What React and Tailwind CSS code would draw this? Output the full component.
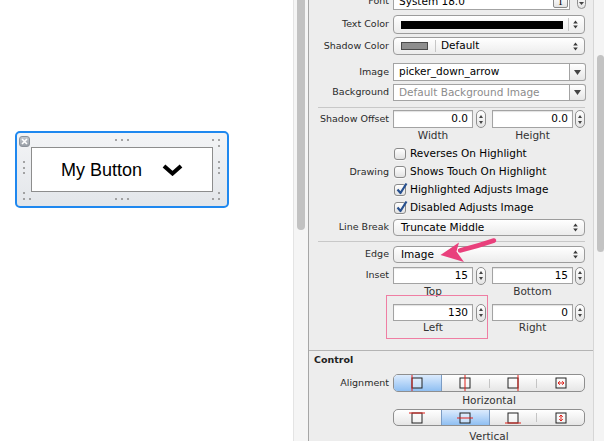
import React from 'react';

const LABEL = 'w-[80px] shrink-0 text-right text-[9.5px] text-[#2a2a2a] whitespace-nowrap';
const SUB = 'text-center text-[10.5px] text-[#333]';

function Arrows() {
  return (
    <svg width="5" height="9" viewBox="0 0 5 9">
      <path d="M2.5 0.5 L4.8 3.4 H0.2Z M2.5 8.5 L4.8 5.6 H0.2Z" fill="#3a3a3a" />
    </svg>
  );
}

function Popup({ children }) {
  return (
    <div className="ml-[4px] w-[192px] h-full flex items-center rounded-[4px] border border-[#9c9c9c] bg-linear-to-b from-white to-[#ececec] pl-[7px] pr-[6px] text-[10.5px] text-black">
      {children}
      <div className="ml-auto flex items-center">
        <Arrows />
      </div>
    </div>
  );
}

function Stepper() {
  return (
    <div className="w-[10px] h-[18px] shrink-0 rounded-full border border-[#8f8f8f] bg-linear-to-b from-white to-[#e4e4e4] flex flex-col items-center justify-center gap-[3px]">
      <svg width="4" height="3" viewBox="0 0 4 3"><path d="M2 0L4 3H0Z" fill="#444" /></svg>
      <svg width="4" height="3" viewBox="0 0 4 3"><path d="M0 0H4L2 3Z" fill="#444" /></svg>
    </div>
  );
}

function NumField({ value, wide }) {
  return (
    <div
      className={`${wide ? 'w-[81px]' : 'w-[80px]'} h-full shrink-0 border border-[#a3a3a3] bg-white flex items-center justify-end pr-[4px] text-[10.5px] text-black shadow-[inset_0_1px_1px_rgba(0,0,0,0.12)]`}
    >
      {value}
    </div>
  );
}

function PairRow({ label, a, b, className }) {
  return (
    <div className={`flex items-center ${className}`}>
      <div className={LABEL}>{label}</div>
      <div className="ml-[4px] flex items-center h-full">
        <NumField value={a} />
        <div className="ml-[3px]"><Stepper /></div>
        <div className="ml-[6px] h-full"><NumField value={b} wide /></div>
        <div className="ml-[2px]"><Stepper /></div>
      </div>
    </div>
  );
}

function SubLabels({ a, b, className = '' }) {
  return (
    <div className={`flex items-center h-[14px] ${className}`}>
      <div className="w-[84px] shrink-0" />
      <div className={`w-[80px] ${SUB}`}>{a}</div>
      <div className="w-[19px] shrink-0" />
      <div className={`w-[81px] ${SUB}`}>{b}</div>
    </div>
  );
}

function Checkbox({ checked }) {
  return (
    <div className="relative w-[12px] h-[12px] shrink-0 rounded-[3px] border border-[#8a8a8a] bg-linear-to-b from-white to-[#e2e2e2] shadow-[0_1px_0_rgba(255,255,255,0.6)]">
      {checked && (
        <svg className="absolute left-[1px] top-[-3px]" width="12" height="13" viewBox="0 0 12 13">
          <path d="M1.5 7.5 L4.5 11 L10.5 1.5" fill="none" stroke="#27508f" strokeWidth="2.2" strokeLinejoin="round" />
        </svg>
      )}
    </div>
  );
}

function CheckRow({ label, text, checked }) {
  return (
    <div className="flex items-center h-[18px]">
      <div className={LABEL}>{label}</div>
      <div className="ml-[5px]"><Checkbox checked={checked} /></div>
      <div className="ml-[4px] text-[10.5px] text-black whitespace-nowrap">{text}</div>
    </div>
  );
}

function AlignIcon({ kind }) {
  const red = '#e0201a';
  return (
    <svg width="16" height="16" viewBox="0 0 16 16">
      <rect x="3" y="3" width="10" height="10" fill="#fff" fillOpacity="0.4" stroke="#222" />
      {kind === 'hl' && <line x1="3" y1="0" x2="3" y2="16" stroke={red} />}
      {kind === 'hc' && <line x1="8" y1="0" x2="8" y2="16" stroke={red} />}
      {kind === 'hr' && <line x1="13" y1="0" x2="13" y2="16" stroke={red} />}
      {kind === 'hf' && (
        <path d="M5 8H11 M5 8L6.8 6.2 M5 8L6.8 9.8 M11 8L9.2 6.2 M11 8L9.2 9.8" stroke={red} fill="none" />
      )}
      {kind === 'vt' && <line x1="0" y1="3" x2="16" y2="3" stroke={red} />}
      {kind === 'vc' && <line x1="0" y1="8" x2="16" y2="8" stroke={red} />}
      {kind === 'vb' && <line x1="0" y1="13" x2="16" y2="13" stroke={red} />}
      {kind === 'vf' && (
        <path d="M8 5V11 M8 5L6.2 6.8 M8 5L9.8 6.8 M8 11L6.2 9.2 M8 11L9.8 9.2" stroke={red} fill="none" />
      )}
    </svg>
  );
}

function Segmented({ icons, selected, h }) {
  return (
    <div className={`ml-[4px] w-[192px] ${h} flex rounded-[5px] border border-[#8e8e8e] overflow-hidden bg-linear-to-b from-white to-[#e6e6e6]`}>
      {icons.map((k, i) => {
        const sel = i === selected;
        const nextSel = i + 1 === selected;
        return (
          <React.Fragment key={k}>
            <div
              className={`flex-1 flex items-center justify-center ${
                sel ? 'bg-linear-to-b from-[#dcebfd] to-[#8fbff2]' : ''
              }`}
            >
              <AlignIcon kind={k} />
            </div>
            {i < icons.length - 1 &&
              (sel || nextSel ? (
                <div className="w-px self-stretch bg-[#7b9cc4]" />
              ) : (
                <div className="w-px h-[9px] self-center bg-[#c4c4c4]" />
              ))}
          </React.Fragment>
        );
      })}
    </div>
  );
}

function Dot({ className }) {
  return <div className={`absolute w-[2px] h-[2px] rounded-full bg-[#8a8a8a] ${className}`} />;
}

function CanvasButton() {
  return (
    <div className="relative w-[214px] h-[77px] border-2 border-[#1f88ef] rounded-[5px] bg-linear-to-b from-[#f3f4f6] to-[#e3e6ea] p-[14px]">
      <div className="absolute left-[2px] top-[3px] w-[11px] h-[11px] rounded-[3px] border border-[#8d939b] bg-linear-to-b from-[#c3c7cd] to-[#9aa0a8] flex items-center justify-center">
        <svg width="7" height="7" viewBox="0 0 7 7">
          <path d="M1 1L6 6M6 1L1 6" stroke="#fff" strokeWidth="1.6" />
        </svg>
      </div>
      <Dot className="left-[98px] top-[6px]" />
      <Dot className="left-[104px] top-[6px]" />
      <Dot className="left-[110px] top-[6px]" />
      <Dot className="left-[195px] top-[6px]" />
      <Dot className="left-[201px] top-[6px]" />
      <Dot className="left-[201px] top-[12px]" />
      <Dot className="left-[6px] top-[28px]" />
      <Dot className="left-[6px] top-[34px]" />
      <Dot className="left-[6px] top-[39px]" />
      <Dot className="left-[201px] top-[28px]" />
      <Dot className="left-[201px] top-[34px]" />
      <Dot className="left-[201px] top-[39px]" />
      <Dot className="left-[6px] top-[59px]" />
      <Dot className="left-[6px] top-[65px]" />
      <Dot className="left-[12px] top-[65px]" />
      <Dot className="left-[98px] top-[65px]" />
      <Dot className="left-[104px] top-[65px]" />
      <Dot className="left-[110px] top-[65px]" />
      <Dot className="left-[201px] top-[59px]" />
      <Dot className="left-[195px] top-[65px]" />
      <Dot className="left-[201px] top-[65px]" />
      <div className="h-full border border-[#8d8d8d] bg-white flex items-center justify-center gap-[20px]">
        <span className="font-['Liberation_Sans',Arial,sans-serif] text-[18px] leading-none text-black">My Button</span>
        <svg width="21" height="12" viewBox="0 0 21 12">
          <path d="M2 2 L10.5 9.5 L19 2" fill="none" stroke="#000" strokeWidth="4" />
        </svg>
      </div>
    </div>
  );
}

export default function App() {
  return (
    <div className="relative w-[604px] h-[441px] overflow-hidden flex bg-white font-['DejaVu_Sans','Lucida_Grande',sans-serif]">
      {/* design canvas */}
      <div className="w-[293px] h-full bg-white pl-[15px] pt-[131px]">
        <CanvasButton />
      </div>

      {/* canvas scroller */}
      <div className="w-[15px] h-full bg-[#f5f5f5] border-l border-[#e4e4e4] pl-[3px]">
        <div className="w-[8px] h-[230px] rounded-b-full bg-[#c2c2c2]" />
      </div>

      {/* inspector */}
      <div className="w-[286px] h-full overflow-hidden bg-[#ededed] border-l border-[#a6a6a6] border-r border-r-[#d6d6d6]">
        <div className="flex items-center h-[17px] mt-[-7px]">
          <div className={LABEL}>Font</div>
          <div className="ml-[4px] w-[177px] h-full border border-[#a3a3a3] bg-white flex items-center pl-[5px] pr-[1px] text-[10.5px]">
            System 18.0
            <div className="ml-auto w-[15px] h-[12px] rounded-[2px] border border-[#8a8a8a] bg-linear-to-b from-white to-[#e4e4e4] flex items-center justify-center font-['Liberation_Serif',serif] text-[10px] leading-none">
              T
            </div>
          </div>
          <div className="ml-[7px] w-[9px] h-[15px] rounded-full border border-[#8f8f8f] bg-linear-to-b from-white to-[#e4e4e4] flex items-end justify-center pb-[3px]">
            <svg width="5" height="3" viewBox="0 0 5 3"><path d="M0 0H5L2.5 3Z" fill="#444" /></svg>
          </div>
        </div>

        <div className="flex items-center h-[19px] mt-[5px]">
          <div className={LABEL}>Text Color</div>
          <Popup>
            <div className="w-[162px] h-[8px] bg-black" />
            <div className="ml-[5px] w-px h-[13px] bg-[#c6c6c6]" />
          </Popup>
        </div>

        <div className="flex items-center h-[18px] mt-[3px]">
          <div className={LABEL}>Shadow Color</div>
          <Popup>
            <div className="w-[27px] h-[8px] bg-[#8e8e8e] border border-[#4a4a4a]" />
            <div className="ml-[7px] w-px h-[12px] bg-[#c6c6c6]" />
            <span className="ml-[5px]">Default</span>
          </Popup>
        </div>

        <div className="flex items-center h-[18px] mt-[8px]">
          <div className={LABEL}>Image</div>
          <div className="ml-[4px] flex h-full">
            <div className="w-[177px] h-full border border-[#a3a3a3] bg-white flex items-center pl-[5px] text-[10.5px] text-black">
              picker_down_arrow
            </div>
            <div className="w-[16px] h-full border border-l-0 border-[#a3a3a3] rounded-r-[3px] bg-linear-to-b from-white to-[#e6e6e6] flex items-center justify-center">
              <svg width="7" height="5" viewBox="0 0 7 5"><path d="M0 0H7L3.5 5Z" fill="#444" /></svg>
            </div>
          </div>
        </div>

        <div className="flex items-center h-[17px] mt-[3px]">
          <div className={LABEL}>Background</div>
          <div className="ml-[4px] flex h-full">
            <div className="w-[177px] h-full border border-[#a3a3a3] bg-white flex items-center pl-[5px] text-[10.5px] text-[#8c8c8c] whitespace-nowrap">
              Default Background Image
            </div>
            <div className="w-[16px] h-full border border-l-0 border-[#a3a3a3] rounded-r-[3px] bg-linear-to-b from-white to-[#e6e6e6] flex items-center justify-center">
              <svg width="7" height="5" viewBox="0 0 7 5"><path d="M0 0H7L3.5 5Z" fill="#444" /></svg>
            </div>
          </div>
        </div>

        <div className="ml-[9px] mr-[8px] h-px mt-[6px] bg-[#c8c8c8]" />

        <PairRow label="Shadow Offset" a="0.0" b="0.0" className="h-[18px] mt-[2px]" />
        <SubLabels a="Width" b="Height" className="mt-[1px]" />

        <div className="mt-[2px]">
          <CheckRow label="" text="Reverses On Highlight" />
          <CheckRow label="Drawing" text="Shows Touch On Highlight" />
          <CheckRow label="" text="Highlighted Adjusts Image" checked />
          <CheckRow label="" text="Disabled Adjusts Image" checked />
        </div>

        <div className="flex items-center h-[17px] mt-[2px]">
          <div className={LABEL}>Line Break</div>
          <Popup>Truncate Middle</Popup>
        </div>

        <div className="ml-[9px] mr-[8px] h-px mt-[5px] bg-[#c8c8c8]" />

        <div className="flex items-center h-[17px] mt-[4px]">
          <div className={LABEL}>Edge</div>
          <Popup>Image</Popup>
        </div>

        <PairRow label="Inset" a="15" b="15" className="h-[17px] mt-[4px]" />
        <SubLabels a="Top" b="Bottom" className="mt-[1px]" />

        <PairRow label="" a="130" b="0" className="h-[17px] mt-[5px]" />
        <SubLabels a="Left" b="Right" />

        <div className="mt-[15px] border-t border-[#b4b4b4]">
          <div className="h-[14px] mt-[2px] pl-[5px] flex items-center text-[9.5px] font-bold text-[#222]">Control</div>
          <div className="flex items-center mt-[7px]">
            <div className={LABEL}>Alignment</div>
            <Segmented icons={['hl', 'hc', 'hr', 'hf']} selected={0} h="h-[18px]" />
          </div>
          <div className="h-[14px] mt-[2px] flex items-center">
            <div className="w-[84px] shrink-0" />
            <div className={`w-[192px] ${SUB}`}>Horizontal</div>
          </div>
          <div className="flex items-center mt-[1px]">
            <div className="w-[80px] shrink-0" />
            <Segmented icons={['vt', 'vc', 'vb', 'vf']} selected={1} h="h-[17px]" />
          </div>
          <div className="h-[14px] mt-[4px] flex items-center">
            <div className="w-[84px] shrink-0" />
            <div className={`w-[192px] ${SUB}`}>Vertical</div>
          </div>
        </div>
      </div>

      {/* inspector scroller */}
      <div className="w-[10px] h-full bg-[#f4f4f4] flex justify-end">
        <div className="mt-[55px] w-[7px] h-[197px] rounded-full bg-[#c3c3c3]" />
      </div>

      {/* annotations */}
      <div className="absolute left-[386px] top-[295px] w-[102px] h-[44px] border border-[#ef7ea3]" />
      <svg className="absolute left-[430px] top-[230px]" width="75" height="40" viewBox="430 230 75 40">
        <path d="M494 240.5 Q478 246 460 250.5" fill="none" stroke="#e9407c" strokeWidth="4.5" strokeLinecap="round" />
        <path d="M440.5 255 L459 242.5 L456.5 251.5 L464 262 Z" fill="#e9407c" />
      </svg>
    </div>
  );
}
